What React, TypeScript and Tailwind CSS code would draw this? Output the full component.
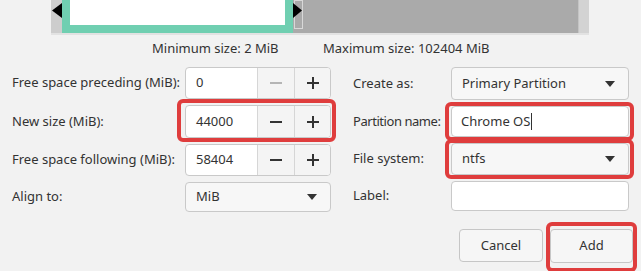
import React from 'react'

const font = { fontFamily: '"Noto Sans", "Open Sans", sans-serif' }

function Spin({ value, minusDisabled }: { value: string; minusDisabled?: boolean }) {
  return (
    <div className="flex h-full w-[146px] rounded-[4px] border border-[#c9c9c9] bg-white overflow-hidden">
      <div className="flex-1 flex items-center pl-[10px] text-[#333]">{value}</div>
      <div className={`w-[37px] flex items-center justify-center border-l border-[#d6d6d6] bg-[#f4f4f4] ${minusDisabled ? 'text-[#b5b5b5]' : 'text-[#333]'}`}>
        <svg width="12" height="12" viewBox="0 0 12 12"><rect x="0" y="5" width="12" height="2" fill="currentColor" /></svg>
      </div>
      <div className="w-[36px] flex items-center justify-center border-l border-[#d6d6d6] bg-[#f4f4f4] text-[#333]">
        <svg width="12" height="12" viewBox="0 0 12 12"><rect x="0" y="5" width="12" height="2" fill="currentColor" /><rect x="5" y="0" width="2" height="12" fill="currentColor" /></svg>
      </div>
    </div>
  )
}

function Combo({ value, w }: { value: string; w: string }) {
  return (
    <div className={`flex h-full ${w} items-center justify-between rounded-[4px] border border-[#c9c9c9] bg-[#f7f7f7] pl-[10px] pr-[13px] text-[#333]`}>
      <span>{value}</span>
      <svg width="10" height="6" viewBox="0 0 10 6"><path d="M0 0 L10 0 L5 6 Z" fill="#333" /></svg>
    </div>
  )
}

function Entry({ value, cursor }: { value: string; cursor?: boolean }) {
  return (
    <div className="flex h-full w-[178px] items-center rounded-[4px] border border-[#c9c9c9] bg-white pl-[9px] text-[#333]">
      <span>{value}</span>
      {cursor && <span className="ml-[1px] h-[17px] w-px bg-[#333]" />}
    </div>
  )
}

function RedBox({ className }: { className: string }) {
  return <span className={`pointer-events-none absolute rounded-[6px] border-[4px] border-[#df3d3d] ${className}`} />
}

export default function App() {
  return (
    <div className="relative h-[271px] w-[641px] overflow-hidden bg-[#f2f2f2] text-[13px] whitespace-nowrap" style={font}>
      {/* partition bar */}
      <div className="ml-[51px] flex h-[33px] w-[538px]">
        <div className="relative w-[11px] bg-[#cdcdcd]">
          <svg className="absolute left-[1px] top-[3px]" width="10" height="15" viewBox="0 0 10 15"><path d="M10 0 L0 7.5 L10 15 Z" fill="#000" /></svg>
        </div>
        <div className="w-[231px] border-x-[8px] border-b-[8px] border-[#70cfb1] bg-white" />
        <div className="relative flex-1 bg-[#aaaaaa]">
          <span className="absolute left-[1px] top-0 h-[29px] w-[9px] border border-[#d8d8d8]" />
          <svg className="absolute left-0 top-[3px]" width="9" height="15" viewBox="0 0 9 15"><path d="M0 0 L9 7.5 L0 15 Z" fill="#000" /></svg>
        </div>
        <div className="w-[11px] border-l border-[#c4c4c4] bg-[#d3d3d3]" />
      </div>
      <div className="ml-[51px] h-[2px] w-[538px] bg-[#e2e2e2]" />

      <div className="mt-[6px] flex h-[16px] items-center text-[#333]">
        <span className="ml-[152px] w-[171px]">Minimum size: 2 MiB</span>
        <span>Maximum size: 102404 MiB</span>
      </div>

      <div className="mt-[10px] flex">
        {/* left column */}
        <div className="flex w-[341px] flex-col gap-[6px] text-[#333]">
          <div className="flex h-[32px] items-center">
            <span className="w-[185px] pl-[12px]">Free space preceding (MiB):</span>
            <Spin value="0" minusDisabled />
          </div>
          <div className="flex h-[33px] items-center">
            <span className="w-[185px] pl-[12px]">New size (MiB):</span>
            <div className="relative h-full">
              <Spin value="44000" />
              <RedBox className="-left-[8px] -right-[5px] -top-[6px] -bottom-[4px]" />
            </div>
          </div>
          <div className="flex h-[32px] items-center">
            <span className="w-[185px] pl-[12px]">Free space following (MiB):</span>
            <Spin value="58404" />
          </div>
          <div className="flex h-[30px] items-center">
            <span className="w-[185px] pl-[12px]">Align to:</span>
            <Combo value="MiB" w="w-[146px]" />
          </div>
        </div>

        {/* right column */}
        <div className="flex flex-col gap-[6px] text-[#333]">
          <div className="flex h-[33px] items-center">
            <span className="w-[110px] pl-[12px]">Create as:</span>
            <Combo value="Primary Partition" w="w-[178px]" />
          </div>
          <div className="flex h-[31px] items-center">
            <span className="w-[110px] pl-[12px] tracking-[-0.45px]">Partition name:</span>
            <div className="relative h-full">
              <Entry value="Chrome OS" cursor />
              <RedBox className="-left-[6px] -right-[5px] -top-[4px] -bottom-[4px]" />
            </div>
          </div>
          <div className="flex h-[32px] items-center">
            <span className="w-[110px] pl-[12px]">File system:</span>
            <div className="relative h-full">
              <Combo value="ntfs" w="w-[178px]" />
              <RedBox className="-left-[6px] -right-[5px] -top-[4px] -bottom-[4px]" />
            </div>
          </div>
          <div className="flex h-[30px] items-center">
            <span className="w-[110px] pl-[12px]">Label:</span>
            <Entry value="" />
          </div>
        </div>
      </div>

      <div className="mt-[17px] flex justify-end pr-[8px] text-[#333]">
        <button className="flex h-[33px] w-[84px] items-center justify-center rounded-[4px] border border-[#c6c6c6] bg-[#f6f6f6]">Cancel</button>
        <div className="relative ml-[7px]">
          <button className="flex h-[34px] w-[83px] items-center justify-center rounded-[4px] border border-[#c6c6c6] bg-[#f6f6f6]">Add</button>
          <RedBox className="-left-[4px] -right-[4px] -top-[7px] -bottom-[9px]" />
        </div>
      </div>
    </div>
  )
}
